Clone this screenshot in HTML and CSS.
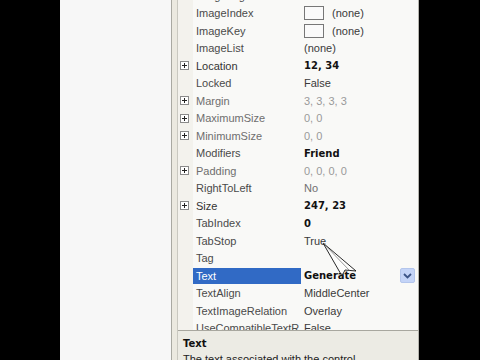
FILE: index.html
```html
<html lang="en">
<head>
    <meta charset="UTF-8">
    <title>Properties</title>
    <link rel="stylesheet" href="styles.css">
</head>
<body>
    <div class="screen">
        <div class="black-left"></div>
        <div class="side-panel"></div>
        <div class="splitter"></div>

        <!-- Property grid -->
        <div class="props">
            <div class="grid-view">
                <div class="grid-rows">
                    <div class="row"><span class="gutter"></span><span class="name">ImageAlign</span><span class="value">MiddleCenter</span></div>
                    <div class="row"><span class="gutter"></span><span class="name">ImageIndex</span><span class="value"><i class="swatch"></i>(none)</span></div>
                    <div class="row"><span class="gutter"></span><span class="name">ImageKey</span><span class="value"><i class="swatch"></i>(none)</span></div>
                    <div class="row"><span class="gutter"></span><span class="name">ImageList</span><span class="value">(none)</span></div>
                    <div class="row"><span class="gutter"><i class="plus"></i></span><span class="name dark">Location</span><span class="value bold">12, 34</span></div>
                    <div class="row"><span class="gutter"></span><span class="name">Locked</span><span class="value">False</span></div>
                    <div class="row"><span class="gutter"><i class="plus"></i></span><span class="name light">Margin</span><span class="value light">3, 3, 3, 3</span></div>
                    <div class="row"><span class="gutter"><i class="plus"></i></span><span class="name light">MaximumSize</span><span class="value light">0, 0</span></div>
                    <div class="row"><span class="gutter"><i class="plus"></i></span><span class="name light">MinimumSize</span><span class="value light">0, 0</span></div>
                    <div class="row"><span class="gutter"></span><span class="name">Modifiers</span><span class="value bold">Friend</span></div>
                    <div class="row"><span class="gutter"><i class="plus"></i></span><span class="name light">Padding</span><span class="value light">0, 0, 0, 0</span></div>
                    <div class="row"><span class="gutter"></span><span class="name">RightToLeft</span><span class="value mid">No</span></div>
                    <div class="row"><span class="gutter"><i class="plus"></i></span><span class="name dark">Size</span><span class="value bold">247, 23</span></div>
                    <div class="row"><span class="gutter"></span><span class="name">TabIndex</span><span class="value bold">0</span></div>
                    <div class="row"><span class="gutter"></span><span class="name">TabStop</span><span class="value">True</span></div>
                    <div class="row"><span class="gutter"></span><span class="name">Tag</span><span class="value"></span></div>
                    <div class="row selected"><span class="gutter"></span><span class="name">Text</span><span class="value bold">Generate<b class="drop-btn"><svg width="9" height="6" viewBox="0 0 9 6"><path d="M1 1 L4.5 4.5 L8 1" fill="none" stroke="#3c5486" stroke-width="1.8"/></svg></b></span></div>
                    <div class="row"><span class="gutter"></span><span class="name">TextAlign</span><span class="value">MiddleCenter</span></div>
                    <div class="row"><span class="gutter"></span><span class="name">TextImageRelation</span><span class="value">Overlay</span></div>
                    <div class="row"><span class="gutter"></span><span class="name">UseCompatibleTextR</span><span class="value">False</span></div>
                </div>
            </div>
            <div class="desc">
                <div class="desc-title">Text</div>
                <div class="desc-text">The text associated with the control.</div>
            </div>
        </div>

        <div class="black-right"></div>
    </div>

    <!-- mouse pointer -->
    <svg class="pointer" width="40" height="40" viewBox="0 0 40 40">
        <path d="M1 1 L20 34 L23 28 L34 29 Z" fill="rgba(255,255,255,0.6)" stroke="#111" stroke-width="0.9"/>
        <path d="M1 1 L28 29" fill="none" stroke="#555" stroke-width="0.6"/>
    </svg>
</body>
</html>
```

FILE: styles.css
```css
/* Base */
body {
    margin: 0;
    padding: 0;
    background-color: #000;
    font-family: "Liberation Sans", Arial, sans-serif;
    font-size: 11px;
    overflow: hidden;
}

.screen {
    display: flex;
    width: 480px;
    height: 360px;
}

.black-left {
    width: 60px;
    background-color: #000;
}

.side-panel {
    width: 111px;
    background-color: #f7f7f7;
}

.splitter {
    width: 7px;
    box-sizing: border-box;
    background-color: #ebe9e0;
    border-left: 1px solid #a9a9a2;
    border-right: 1px solid #c9c8c0;
}

.black-right {
    flex: 1;
    background-color: #000;
}

/* Property grid */
.props {
    width: 241px;
    height: 360px;
    display: flex;
    flex-direction: column;
    background-color: #f9f9f7;
    border-right: 1px solid #b5b4ad;
    box-sizing: border-box;
}

.grid-view {
    height: 330px;
    flex-shrink: 0;
    overflow: hidden;
}

.grid-rows {
    margin-top: -13px;
}

.row {
    display: grid;
    grid-template-columns: 15px 108px 1fr;
    height: 17.5px;
    align-items: center;
    color: #4a4a4a;
}

.gutter {
    height: 100%;
    display: flex;
    align-items: center;
    padding-left: 2px;
    background-color: #f3f2ed;
}

.plus {
    position: relative;
    width: 9px;
    height: 9px;
    box-sizing: border-box;
    border: 1px solid #8a8a8a;
    background-color: #fff;
}

.plus::before,
.plus::after {
    content: "";
    position: absolute;
    background-color: #222;
}

.plus::before {
    left: 1px;
    top: 3px;
    width: 5px;
    height: 1px;
}

.plus::after {
    left: 3px;
    top: 1px;
    width: 1px;
    height: 5px;
}

.name {
    height: 100%;
    display: flex;
    align-items: center;
    padding-left: 3px;
    white-space: nowrap;
    overflow: hidden;
}

.value {
    display: flex;
    align-items: center;
    padding-left: 3px;
    white-space: nowrap;
    color: #3a3a3a;
}

.name.dark {
    color: #333;
}

.name.light {
    color: #6e6e6e;
}

.value.light {
    color: #9a9a9a;
}

.value.mid {
    color: #707070;
}

.value.bold {
    font-family: "DejaVu Sans", Verdana, sans-serif;
    font-weight: bold;
    font-size: 10px;
    color: #111;
}

.swatch {
    width: 20px;
    height: 14px;
    box-sizing: border-box;
    border: 1px solid #777;
    background-color: #fafafa;
    margin-right: 8px;
}

.row.selected .name {
    background-color: #316ac5;
    color: #fff;
    height: 16px;
}

.drop-btn {
    margin-left: auto;
    margin-right: 3px;
    width: 15px;
    height: 15px;
    box-sizing: border-box;
    border: 1px solid #b4c6ec;
    border-radius: 2px;
    background-color: #c4d4f7;
    display: flex;
    align-items: center;
    justify-content: center;
}

/* Description */
.desc {
    flex: 1;
    overflow: hidden;
    background-color: #ecebe4;
    border-top: 1px solid #a8a79f;
    padding: 6px 5px 0 5px;
}

.desc-title {
    font-family: "DejaVu Sans", Verdana, sans-serif;
    font-weight: bold;
    font-size: 10px;
    color: #111;
    line-height: 14px;
}

.desc-text {
    color: #222;
    line-height: 14px;
    margin-top: 1px;
}

/* Pointer */
.pointer {
    position: absolute;
    left: 322px;
    top: 242px;
}
```
